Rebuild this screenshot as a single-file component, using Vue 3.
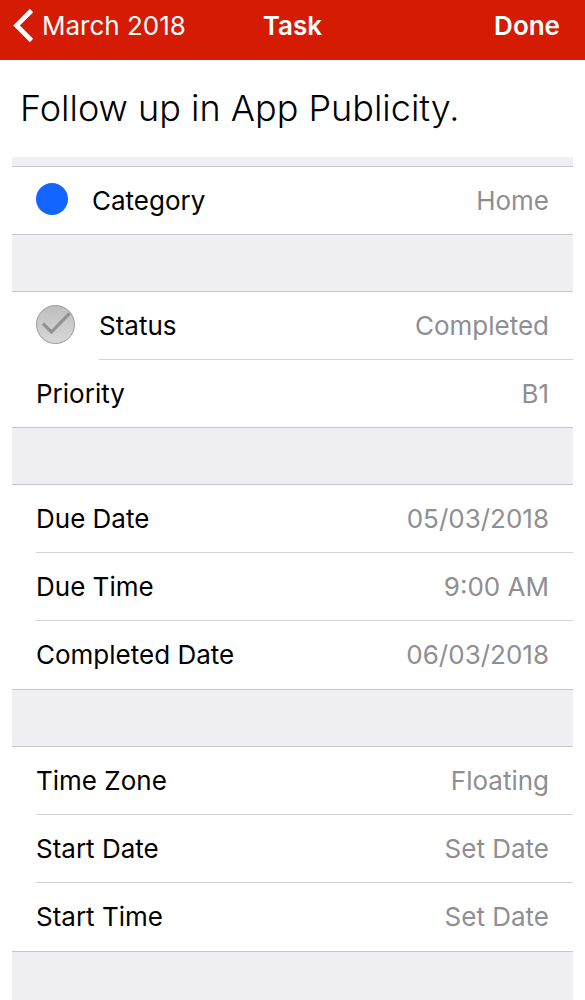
<script setup>
const groups = [
  { id: 'category', rows: [{ label: 'Category', value: 'Home', icon: 'dot' }] },
  {
    id: 'state',
    rows: [
      { label: 'Status', value: 'Completed', icon: 'check' },
      { label: 'Priority', value: 'B1' },
    ],
  },
  {
    id: 'due',
    rows: [
      { label: 'Due Date', value: '05/03/2018' },
      { label: 'Due Time', value: '9:00 AM' },
      { label: 'Completed Date', value: '06/03/2018' },
    ],
  },
  {
    id: 'start',
    rows: [
      { label: 'Time Zone', value: 'Floating' },
      { label: 'Start Date', value: 'Set Date' },
      { label: 'Start Time', value: 'Set Date' },
    ],
  },
]
</script>

<template>
  <div class="screen">
    <header class="bar">
      <button class="nav back" type="button">
        <svg width="22" height="36" viewBox="0 0 22 36" aria-hidden="true">
          <path d="M19.5 3.5 4.5 18.5l15 15" fill="none" stroke="#fff" stroke-width="4.6" />
        </svg>
        <span>March 2018</span>
      </button>
      <h1 class="heading">Task</h1>
      <button class="nav done" type="button">Done</button>
    </header>
    <h2 class="title">Follow up in App Publicity.</h2>
    <main class="list">
      <section v-for="g in groups" :key="g.id" class="group">
        <button v-for="r in g.rows" :key="r.label" type="button" class="row">
          <svg v-if="r.icon === 'dot'" class="icon" width="32" height="32" viewBox="0 0 32 32" aria-hidden="true">
            <circle cx="16" cy="16" r="16" fill="#1464ff" />
          </svg>
          <svg v-if="r.icon === 'check'" class="icon" width="39" height="39" viewBox="0 0 39 39" aria-hidden="true">
            <defs>
              <linearGradient id="disc" x1="0" y1="0" x2="0" y2="1">
                <stop offset="0" stop-color="#bebebe" />
                <stop offset="1" stop-color="#d8d8d8" />
              </linearGradient>
            </defs>
            <circle cx="19.5" cy="19.5" r="19" fill="url(#disc)" stroke="#9a9a9a" />
            <path d="m7 18.7 8.4 8.3L33.5 8.3" fill="none" stroke="#929292" stroke-width="3.2" />
          </svg>
          <span class="cell">
            <span class="label">{{ r.label }}</span>
            <span class="value">{{ r.value }}</span>
          </span>
        </button>
      </section>
    </main>
  </div>
</template>

<style>
body {
  margin: 0;
  background: #fff;
}
</style>

<style scoped>
.screen {
  display: flex;
  flex-direction: column;
  min-height: 100vh;
  font-family: Inter, "Liberation Sans", sans-serif;
  color: #000;
}
button {
  margin: 0;
  border: 0;
  background: none;
  font: inherit;
  color: inherit;
}
.bar {
  display: grid;
  grid-template-columns: 1fr auto 1fr;
  align-items: center;
  height: 60px;
  padding: 0 12px 10px;
  box-sizing: border-box;
  background: #d61b04;
  color: #fff;
  font-size: 26px;
}
.nav {
  padding: 0;
}
.back {
  display: flex;
  align-items: center;
  gap: 8px;
  justify-self: start;
}
.heading {
  margin: 0;
  font-size: 26px;
  font-weight: 600;
}
.done {
  justify-self: end;
  padding-right: 13px;
  font-weight: 600;
}
.title {
  margin: 0;
  padding: 0 20px;
  font-size: 36px;
  font-weight: 300;
  line-height: 97px;
}
.list {
  flex: 1;
  margin: 0 12px;
  padding-top: 9px;
  background: #efeff4;
}
.group {
  margin-bottom: 56px;
  border: solid #c8c7cc;
  border-width: 1px 0;
  background: #fff;
}
.row {
  display: flex;
  align-items: center;
  width: 100%;
  padding: 0 0 0 24px;
  text-align: left;
  font-size: 26px;
}
.icon {
  flex: none;
  margin: 0 24px 3px 0;
}
.cell {
  display: flex;
  flex: 1;
  justify-content: space-between;
  padding-right: 24px;
  line-height: 67px;
}
.row:not(:last-child) .cell {
  border-bottom: 1px solid #d4d3d7;
}
.row:nth-child(3) .cell {
  line-height: 68px;
}
.value {
  color: #8e8e93;
}
</style>
